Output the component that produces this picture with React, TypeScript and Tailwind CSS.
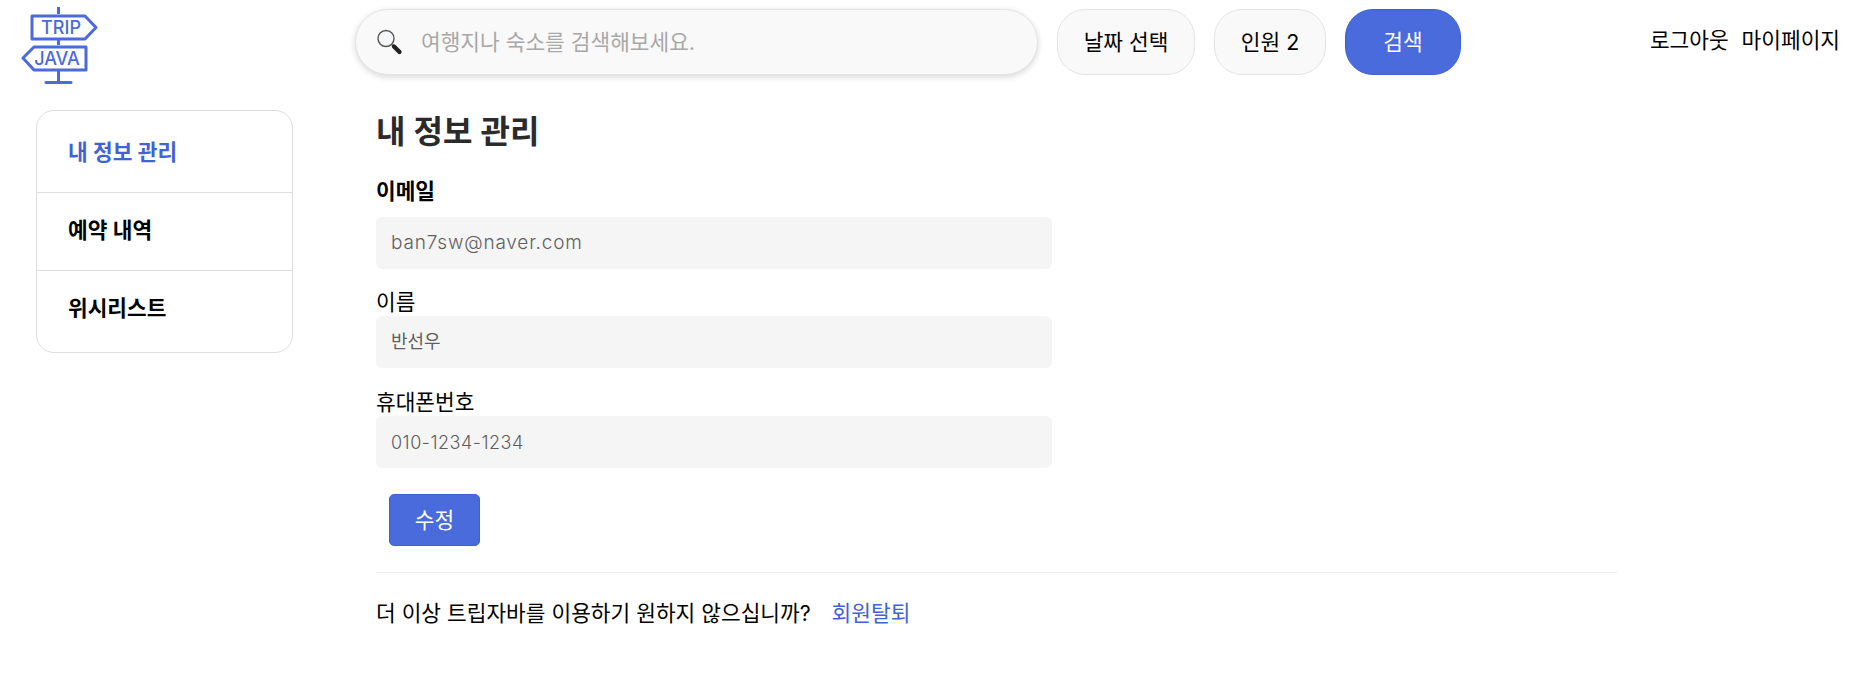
const fontStack = { fontFamily: '"Inter", "Noto Sans CJK KR", sans-serif' }

function Logo() {
  return (
    <svg width="78" height="78" viewBox="0 0 78 78" fill="none" stroke="#4a6bd8" className="block">
      <path d="M37.5 0V7M37.5 32V38M37.5 63V75" strokeWidth="3" />
      <path d="M25 75.5H50" strokeWidth="3" strokeLinecap="round" />
      <path d="M11 9H64L75 20.5L64 32H11Z" strokeWidth="3" strokeLinejoin="round" />
      <path d="M65 40H13L2 51L13 63H65Z" strokeWidth="3" strokeLinejoin="round" />
      <text x="40" y="27" textAnchor="middle" fontSize="18" fontWeight="500" fill="#4a6bd8" stroke="none" fontFamily="Inter, sans-serif">TRIP</text>
      <text x="36" y="58" textAnchor="middle" fontSize="18" fontWeight="500" fill="#4a6bd8" stroke="none" fontFamily="Inter, sans-serif">JAVA</text>
    </svg>
  )
}

function SearchIcon() {
  return (
    <svg width="28" height="28" viewBox="0 0 28 28" fill="none" className="shrink-0">
      <circle cx="11" cy="10.5" r="8" fill="#f4f6f8" stroke="#555" strokeWidth="1.4" />
      <path d="M17 16.5L19 18.5" stroke="#777" strokeWidth="2" />
      <path d="M19 18.5L24.5 24" stroke="#222" strokeWidth="4.4" strokeLinecap="round" />
    </svg>
  )
}

function Header() {
  return (
    <header className="flex h-[85px] items-start">
      <div className="ml-[21px] mt-[7px] w-[76px]">
        <Logo />
      </div>
      <div className="ml-[258px] mt-[9px] flex h-[66px] w-[683px] items-center rounded-[33px] border border-[#e4e4e4] bg-[#f9f9f9] pl-[19px] shadow-[0_2px_6px_rgba(0,0,0,0.16)]">
        <SearchIcon />
        <span className="ml-[18px] text-[21.4px] text-[#a8a8a8]">여행지나 숙소를 검색해보세요.</span>
      </div>
      <button className="ml-[19px] mt-[9px] h-[66px] w-[138px] rounded-[28px] border border-[#e4e4e4] bg-[#f9f9f9] text-[21.4px] text-black">
        날짜 선택
      </button>
      <button className="ml-[19px] mt-[9px] h-[66px] w-[112px] rounded-[28px] border border-[#e4e4e4] bg-[#f9f9f9] text-[21.4px] text-black">
        인원 2
      </button>
      <button className="ml-[19px] mt-[9px] h-[66px] w-[116px] rounded-[28px] border border-[#3f60cf] bg-[#4a6bdc] text-[21.4px] text-white">
        검색
      </button>
      <nav className="ml-auto mr-[18px] mt-[26px] flex gap-[13px] text-[21.4px] leading-[28px] text-black">
        <span>로그아웃</span>
        <span>마이페이지</span>
      </nav>
    </header>
  )
}

function Sidebar() {
  return (
    <aside className="h-[243px] w-[257px] shrink-0 rounded-[18px] border border-[#dedede] text-[21.4px] font-semibold">
      <div className="flex h-[81px] items-center pl-[31px] pt-[2px] text-[#3f63d2]">내 정보 관리</div>
      <div className="flex h-[78px] items-center border-t border-[#dedede] pb-[3px] pl-[31px] text-black">예약 내역</div>
      <div className="flex h-[82px] items-center border-t border-[#dedede] pb-[7px] pl-[31px] text-black">위시리스트</div>
    </aside>
  )
}

function Field({ label, value, valueClass, bold }: { label: string; value: string; valueClass: string; bold?: boolean }) {
  return (
    <>
      <div className={`text-[21.4px] leading-[28px] text-black ${bold ? 'font-semibold' : ''}`}>{label}</div>
      <div className={`flex h-[52px] w-[676px] items-center rounded-[6px] bg-[#f5f5f5] pl-[15px] text-[#5f5f5f] ${valueClass} ${bold ? 'mt-[11px]' : ''}`}>
        {value}
      </div>
    </>
  )
}

export default function App() {
  return (
    <div className="min-h-[676px] bg-white" style={fontStack}>
      <Header />
      <div className="flex pl-[36px] pt-[25px]">
        <Sidebar />
        <main className="ml-[83px] w-[1241px]">
          <h1 className="text-[32px] font-semibold leading-[44px] text-[#2b2b2b]">내 정보 관리</h1>
          <div className="mt-[23px]">
            <Field label="이메일" value="ban7sw@naver.com" valueClass="mt-[12px] pt-[1px] text-[19px] font-light tracking-[0.8px]" bold />
          </div>
          <div className="mt-[19px]">
            <Field label="이름" value="반선우" valueClass="pb-[2px] text-[18px]" />
          </div>
          <div className="mt-[20px]">
            <Field label="휴대폰번호" value="010-1234-1234" valueClass="text-[18px] font-light tracking-[0.5px]" />
          </div>
          <button className="ml-[13px] mt-[26px] h-[52px] w-[91px] rounded-[5px] border border-[#3f60cf] bg-[#4a6bdc] text-[21.4px] text-white">
            수정
          </button>
          <div className="mt-[26px] border-t border-[#ececec]" />
          <div className="mt-[26px] flex text-[21.4px] leading-[28px] text-black">
            <span>더 이상 트립자바를 이용하기 원하지 않으십니까?</span>
            <span className="ml-[21px] text-[#3f63d2]">회원탈퇴</span>
          </div>
        </main>
      </div>
    </div>
  )
}
